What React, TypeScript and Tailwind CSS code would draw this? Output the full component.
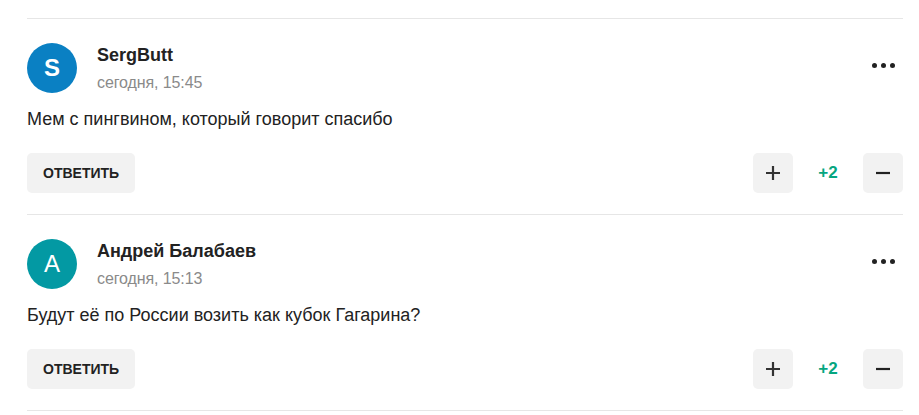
const comments = [
  {
    id: 1,
    letter: "S",
    letterWeight: "font-bold",
    avatar: "bg-[#0a80c3]",
    name: "SergButt",
    date: "сегодня, 15:45",
    text: "Мем с пингвином, который говорит спасибо",
    rating: "+2",
  },
  {
    id: 2,
    letter: "А",
    letterWeight: "font-normal",
    avatar: "bg-[#0399a3]",
    name: "Андрей Балабаев",
    date: "сегодня, 15:13",
    text: "Будут её по России возить как кубок Гагарина?",
    rating: "+2",
  },
];

type Comment = (typeof comments)[number];

const CommentItem = ({ comment }: { comment: Comment }) => {
  return (
    <div className="border-b border-[#e6e6e6] pt-[24px] pb-[21px]">
      <div className="flex items-start">
        <div
          className={`flex h-[50px] w-[50px] flex-none items-center justify-center rounded-full text-[24px] text-white ${comment.avatar} ${comment.letterWeight}`}
        >
          {comment.letter}
        </div>
        <div className="ml-[20px] flex-1">
          <div className="pt-[1px] text-[18px] leading-[22px] font-bold text-[#222]">
            {comment.name}
          </div>
          <div className="mt-[7px] text-[16px] leading-[20px] tracking-[-0.1px] text-[#8a8a8a]">
            {comment.date}
          </div>
        </div>
        <button className="mt-[12px] flex h-[20px] w-[40px] items-center justify-center gap-[4px]">
          <span className="h-[5px] w-[5px] rounded-full bg-[#222]" />
          <span className="h-[5px] w-[5px] rounded-full bg-[#222]" />
          <span className="h-[5px] w-[5px] rounded-full bg-[#222]" />
        </button>
      </div>
      <p className="mt-[14px] text-[18px] leading-[24px] text-[#222]">{comment.text}</p>
      <div className="mt-[22px] flex items-center justify-between">
        <button className="h-[40px] rounded-[5px] bg-[#f2f2f2] px-[16px] text-[14px] font-bold text-[#222]">
          ОТВЕТИТЬ
        </button>
        <div className="flex items-center">
          <button className="flex h-[40px] w-[40px] items-center justify-center rounded-[5px] bg-[#f2f2f2]">
            <svg width="16" height="16" viewBox="0 0 16 16">
              <path d="M8 1v14M1 8h14" stroke="#333" strokeWidth="2.2" />
            </svg>
          </button>
          <span className="w-[70px] text-center text-[17px] font-bold text-[#05a67f]">
            {comment.rating}
          </span>
          <button className="flex h-[40px] w-[40px] items-center justify-center rounded-[5px] bg-[#f2f2f2]">
            <svg width="16" height="16" viewBox="0 0 16 16">
              <path d="M1 8h14" stroke="#222" strokeWidth="2.2" />
            </svg>
          </button>
        </div>
      </div>
    </div>
  );
};

const App = () => {
  return (
    <div className="h-[415px] w-[919px] overflow-hidden bg-white font-['Liberation_Sans',Arial,sans-serif]">
      <div className="mt-[18px] ml-[27px] w-[876px] border-t border-[#e6e6e6]">
        {comments.map((c) => (
          <CommentItem key={c.id} comment={c} />
        ))}
      </div>
    </div>
  );
};

export default App;
